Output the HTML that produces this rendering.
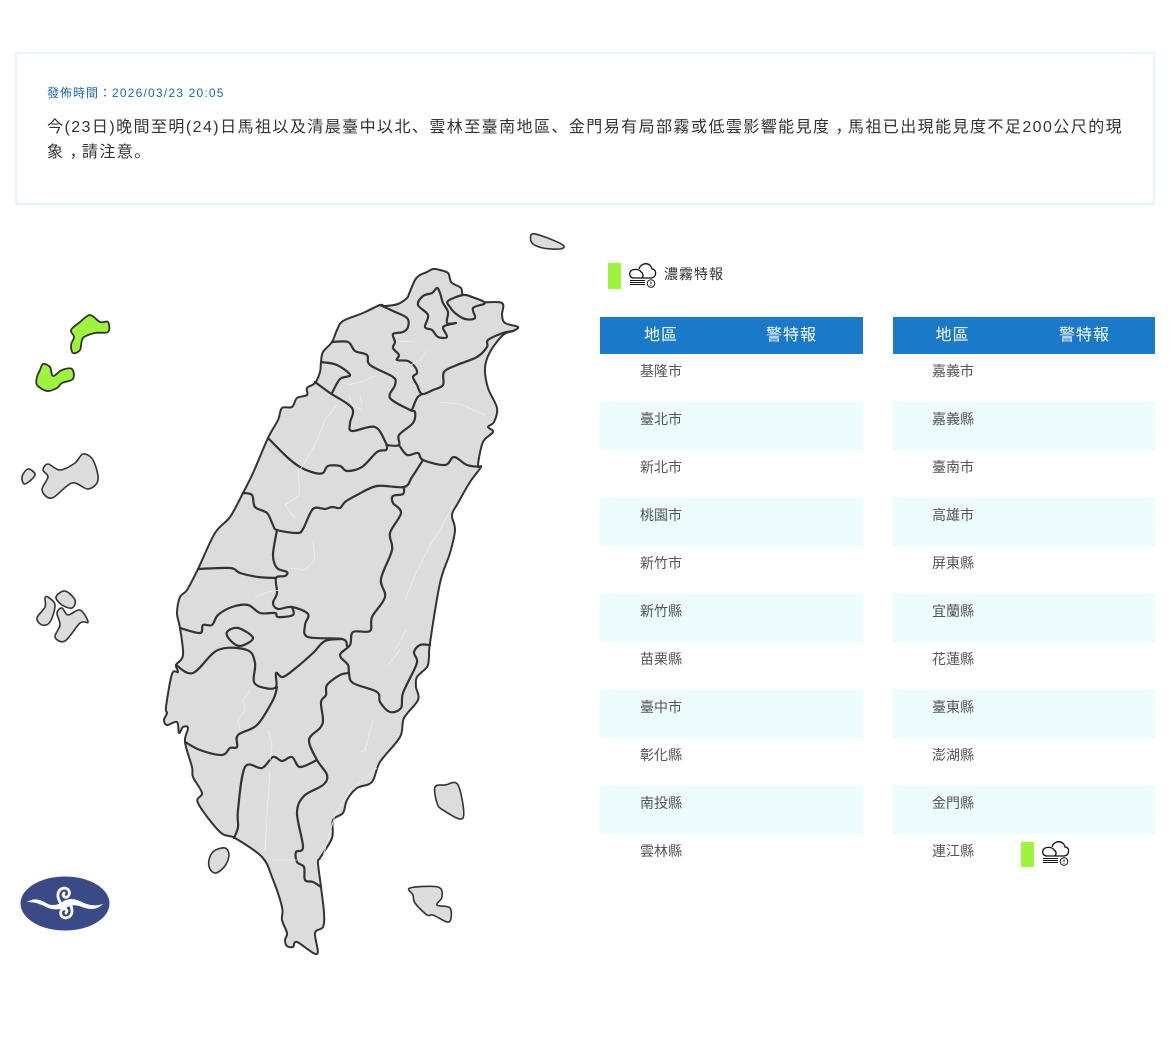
<!DOCTYPE html>
<html><head><meta charset="utf-8"><title>濃霧特報</title>
<style>
html,body{margin:0;padding:0;background:#fff}
body{width:1170px;height:1056px;position:relative;overflow:hidden;font-family:"Liberation Sans","Noto Sans CJK JP",sans-serif}
.box{position:absolute;left:15px;top:52px;width:1136px;height:149px;border:2px solid #e3f2fd}
.meta{position:absolute;left:47px;top:85px;font-size:12px;line-height:16px;letter-spacing:1.2px;color:#1668b4;white-space:nowrap}
.meta i{font-style:normal;letter-spacing:1px}
.msg{position:absolute;left:47px;top:115px;width:1085px;font-size:16px;line-height:25px;letter-spacing:1.44px;color:#333}
.msg b{font-weight:normal;position:relative;left:5px}
svg.map{position:absolute;left:0;top:0}
.legend{position:absolute;left:664px;top:265px;font-size:14px;line-height:18px;letter-spacing:1px;color:#333}
.sw{position:absolute;background:#9cf43c;width:13px}
.t{position:absolute;top:317px;height:550px}
.h{height:37px;background:#1a7ac9;color:#fff;font-size:16px;line-height:37px;letter-spacing:1px;position:relative}
.h span{position:absolute;top:0;text-align:center}
.r{height:48px;font-size:14px;line-height:18px;color:#555;padding-left:40px;box-sizing:border-box;padding-top:8px}
.r:nth-child(even){background:#ecfcfd}
.ic{position:absolute}
</style></head><body>
<div class="box"></div>
<div class="meta"><i>發佈時間：</i>2026/03/23 20:05</div>
<div class="msg">今(23日)晚間至明(24)日馬祖以及清晨臺中以北、雲林至臺南地區、金門易有局部霧或低雲影響能見度<b>，</b>馬祖已出現能見度不足200公尺的現象<b>，</b>請注意。</div>

<svg class="map" width="1170" height="1056" viewBox="0 0 1170 1056">
<g class="s" fill="#dcdcdc" stroke="#333" stroke-width="2" stroke-linejoin="round" stroke-linecap="round">
<path d="M380 305 385 306 398 304 407 298 409 294 415 280 420 275 427 272 433 269 440 270 448 273 450 279 452 283 461 288 463 295 472 297 482 302 502 303 502 315 505 323 518 327 513 331 503 335 490 352 485 368 488 388 497 408 494 422 488 427 493 432 483 442 478 465 481 467 470 482 458 503 452 515 455 530 450 553 440 583 430 643 429 657 427 667 417 677 416 687 418 700 404 718 400 737 380 762 372 782 357 788 347 800 343 813 333 820 332 838 320 858 318 863 321 887 324 913 323 927 315 933 317 954 297 942 293 947 287 946 285 940 287 933 282 920 282 907 272 877 262 857 235 838 220 832 198 803 202 793 193 777 192 767 185 742 188 728 183 727 179 733 177 722 167 725 164 720 167 713 166 707 172 674 178 672 176 665 183 655 180 628 177 613 180 597 187 590 198 569 215 533 230 517 243 493 253 473 268 438 278 420 282 408 292 407 297 398 307 395 307 388 315 383 320 372 321 362 323 352 332 342 337 330 343 321 363 313Z"/>
<g fill="none" stroke-width="2.2">
<path d="M380 305 393 311 407 318 408 327 403 332 393 334 395 342 393 348 399 355 397 360 408 361 415 367 417 373 413 377 417 385 422 394 433 390 443 385 444 372 457 365 477 357 487 347 488 340 503 333 513 331"/>
<path d="M332 342 348 342 355 351 367 355 370 365 393 377 395 385 390 398 410 410 415 412 413 423 399 435 399 445 387 445 386 443 375 427 352 431 350 423 352 408 330 393 315 382"/>
<path d="M422 394 417 398 412 410"/>
<path d="M321 362 337 365 350 375 340 379 332 393"/>
<path d="M268 438 287 457 300 467 315 473 323 473 328 466 340 466 347 471 362 467 377 452 386 450 387 445"/>
<path d="M399 445 407 455 418 453 423 460 445 465 454 457 467 465 481 467"/>
<path d="M423 460 412 477 404 487 377 486 357 495 345 502 340 508 332 507 325 509 313 509 303 529 297 533 277 530 273 525 267 513 255 507 252 495 243 493"/>
<path d="M404 487 403 494 393 496 393 503 401 513 390 533 392 550 381 579 385 597 372 617 370 631 353 632 350 645 340 655 348 665 349 673 353 683 377 692 380 702 390 712 401 708 403 693 415 668 417 660 414 652 420 645 430 645"/>
<path d="M277 530 273 555 277 568 287 572 285 576 276 578 277 593 273 603 278 609 292 607 308 614 305 625 308 637 342 639 347 646"/>
<path d="M198 569 230 568 240 573 258 577 276 578"/>
<path d="M180 628 200 633 203 625 212 625 218 615 232 607 248 605 260 613 275 613 278 617 293 615 292 607"/>
<path d="M227 632 238 628 253 638 240 646 230 640Z"/>
<path d="M176 665 193 673 218 650 247 650 255 663 254 682 265 688 276 687 276 673 283 677 297 667 313 653 325 641 342 639"/>
<path d="M185 742 200 750 222 755 230 748 237 747 238 735 257 725 273 700 277 687"/>
<path d="M234 838 238 827 238 810 245 767 262 768 273 757 282 761 292 757 300 767 317 760"/>
<path d="M349 673 340 675 327 685 326 695 321 702 323 720 320 728 309 740 317 760 327 775 323 785 304 796 297 813 303 847 296 852 297 862 304 867 305 880 313 882 321 887"/>
</g>
<path fill="#dcdcdc" stroke-width="2.2" d="M437 288 440 293 443 303 448 312 447 323 456 323 447 325 443 328 447 337 438 337 432 330 425 327 428 315 418 305 423 296 432 293Z"/>
<path stroke-width="2.2" d="M448 301 463 295 472 297 485 303 473 308 475 318 465 319 455 313 450 307Z"/>
<path d="M532 234 545 237 563 245 560 249 543 248 532 243Z" stroke-width="1.6"/>
<path d="M225 848 229 855 225 866 216 873 210 869 209 860 214 851Z" stroke-width="1.6"/>
<path d="M435 787 445 785 458 785 463 818 443 810 437 803Z" stroke-width="1.6"/>
<path d="M410 888 438 887 442 897 437 905 450 908 449 922 433 915 427 915 415 903 413 895Z" stroke-width="1.6"/>
<g fill="#9cf43c" stroke-width="1.8">
<path d="M90 315 100 322 108 322 108 332 95 333 83 338 80 350 73 353 71 345 74 337 71 330 80 322Z"/>
<path d="M43 364 50 367 53 376 62 370 72 369 73 379 62 383 57 388 47 391 37 385 37 377 40 370Z"/>
</g>
<g stroke-width="1.6">
<path d="M83 454 93 460 98 480 88 489 72 483 52 498 42 490 48 477 43 470 48 464 60 470 75 463Z"/>
<path d="M28 469 35 475 25 484 22 477Z"/>
<path d="M65 591 75 600 72 608 62 605 56 597Z"/>
<path d="M48 597 55 605 50 622 42 625 37 618 45 607 45 598Z"/>
<path d="M62 608 68 615 80 610 88 622 80 623 65 641 55 637 60 625 57 613Z"/>
</g>
</g>
<g fill="none" stroke="#eee" stroke-width=".8" stroke-linejoin="round">
<path d="M440 402 460 404 485 415"/><path d="M427 351 420 360 405 368"/><path d="M398 341 415 342"/>
<path d="M348 385 360 382 375 376"/><path d="M349 395 352 405 362 410M360 395 362 405"/>
<path d="M337 405 325 420 315 445 300 470"/><path d="M298 470 300 495 285 505 295 518"/>
<path d="M313 540 315 560 305 570 290 568"/><path d="M255 597 268 592 280 590"/>
<path d="M453 505 440 530 430 545 415 575 405 600"/><path d="M406 630 395 650M400 650 388 665"/>
<path d="M250 690 243 700 245 710 238 720 240 730"/><path d="M268 730 272 745 270 760"/>
<path d="M270 770 268 800 265 850"/><path d="M272 860 297 860"/>
<path d="M373 720 365 750 360 752"/><path d="M377 768 350 790 335 815 322 860"/>
</g>
<ellipse cx="65" cy="903.5" rx="44.500" ry="27" fill="#3a4a86"/>
<path fill="#fff" d="M27 902C35 897 41 900 48 904 53 906 58 905 62 902 68 898 74 898 82 902 90 906 96 906 103 904 97 910 90 910 82 907 75 904 70 905 66 908 58 910 52 910 46 907 40 904 35 902 27 902Z"/>
<g fill="none" stroke="#fff" stroke-width="2.8" stroke-linecap="round">
<path d="M60 902C56 895 58 889 64 888 70 888 71 895 67 897 64 898 62 895 64 893"/>
<path d="M70 904C74 911 72 917 66 918 60 918 59 911 63 909 66 908 68 911 66 913"/>
</g>
</svg>

<div class="sw" style="left:608px;top:263px;height:26px"></div>
<svg class="ic" style="left:629px;top:263px" width="28" height="27" viewBox="0 0 28 27" fill="none" stroke="#111" stroke-width="1.3">
<path d="M10 6C11 2 15 .7 17 .7 20 .7 22.500 3 23 6 26 6 27 9 26.500 11 26 13.500 24.500 14.800 22 15H5C1.500 15 .7 12.500 .7 11 .7 8 3 6.500 5.500 6.500 8 6 11 7 12 9"/><path d="M12 9C14 10 15 13 13 15"/>
<path d="M1 17.500H16M1 19.500H16M1 21.500H16" stroke-width="1"/><circle cx="22" cy="20.500" r="3.800" stroke-width="1"/><path d="M22 18.500V21M22 21.800V22.800" stroke-width="1"/>
</svg>
<div class="legend">濃霧特報</div>

<div class="t" style="left:600px;width:263px">
<div class="h"><span style="left:1px;width:120px">地區</span><span style="left:120px;width:143px">警特報</span></div>
<div><div class="r">基隆市</div><div class="r">臺北市</div><div class="r">新北市</div><div class="r">桃園市</div><div class="r">新竹市</div><div class="r">新竹縣</div><div class="r">苗栗縣</div><div class="r">臺中市</div><div class="r">彰化縣</div><div class="r">南投縣</div><div class="r">雲林縣</div></div>
</div>
<div class="t" style="left:893px;width:262px">
<div class="h"><span style="left:0;width:119px">地區</span><span style="left:120px;width:143px">警特報</span></div>
<div><div class="r" style="padding-left:39px">嘉義市</div><div class="r" style="padding-left:39px">嘉義縣</div><div class="r" style="padding-left:39px">臺南市</div><div class="r" style="padding-left:39px">高雄市</div><div class="r" style="padding-left:39px">屏東縣</div><div class="r" style="padding-left:39px">宜蘭縣</div><div class="r" style="padding-left:39px">花蓮縣</div><div class="r" style="padding-left:39px">臺東縣</div><div class="r" style="padding-left:39px">澎湖縣</div><div class="r" style="padding-left:39px">金門縣</div><div class="r" style="padding-left:39px">連江縣</div></div>
</div>
<div class="sw" style="left:1021px;top:842px;height:25px"></div>
<svg class="ic" style="left:1042px;top:841px" width="28" height="27" viewBox="0 0 28 27" fill="none" stroke="#111" stroke-width="1.3">
<path d="M10 6C11 2 15 .7 17 .7 20 .7 22.500 3 23 6 26 6 27 9 26.500 11 26 13.500 24.500 14.800 22 15H5C1.500 15 .7 12.500 .7 11 .7 8 3 6.500 5.500 6.500 8 6 11 7 12 9"/><path d="M12 9C14 10 15 13 13 15"/>
<path d="M1 17.500H16M1 19.500H16M1 21.500H16" stroke-width="1"/><circle cx="22" cy="20.500" r="3.800" stroke-width="1"/><path d="M22 18.500V21M22 21.800V22.800" stroke-width="1"/>
</svg>

<script>
document.querySelectorAll('svg.map g.s path').forEach(function(p){
  var d=p.getAttribute('d'),closed=/Z\s*$/.test(d),n=d.match(/-?[\d.]+/g).map(Number),a=[],i,o,L;
  for(i=0;i<n.length;i+=2)a.push([n[i],n[i+1]]);
  L=a.length;
  function at(k){return closed?a[(k+L)%L]:a[Math.max(0,Math.min(L-1,k))]}
  o='M'+a[0][0]+' '+a[0][1];
  for(i=0;i<(closed?L:L-1);i++){
    var p0=at(i-1),p1=at(i),p2=at(i+1),p3=at(i+2);
    o+='C'+(p1[0]+(p2[0]-p0[0])/6)+' '+(p1[1]+(p2[1]-p0[1])/6)+' '+(p2[0]-(p3[0]-p1[0])/6)+' '+(p2[1]-(p3[1]-p1[1])/6)+' '+p2[0]+' '+p2[1];
  }
  if(closed)o+='Z';
  p.setAttribute('d',o);
});
</script>
</body></html>
